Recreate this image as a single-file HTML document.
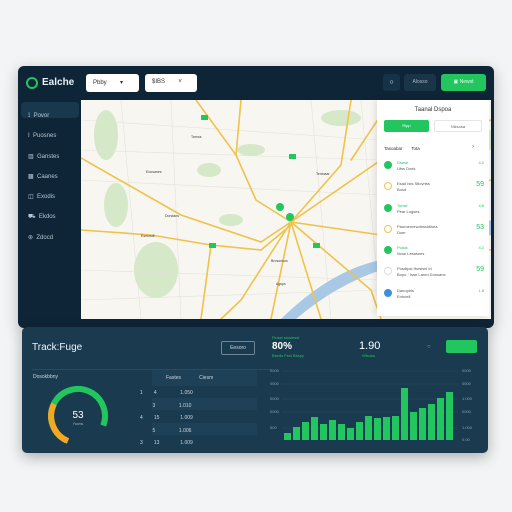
<!DOCTYPE html>
<html><head><style>
*{margin:0;padding:0;box-sizing:border-box}
body{width:512px;height:512px;background:#f3f4f5;font-family:"Liberation Sans",sans-serif;position:relative;overflow:hidden}
.abs{position:absolute}
.top{left:18px;top:66px;width:476px;height:262px;background:#0e2537;border-radius:6px;box-shadow:0 4px 14px rgba(0,0,0,.25)}
.sb{color:#b9c7d2;font-size:6px}
.bottom{left:22px;top:327px;width:466px;height:126px;background:#1a3a50;border-radius:5px;box-shadow:0 4px 14px rgba(0,0,0,.3)}
.t{color:#c9d6de;font-size:5px}
</style></head><body>
<div class="abs top"></div>
<div class="abs" style="left:26px;top:77px;width:12px;height:12px;border:2px solid #22c55e;border-radius:50%"></div>
<div class="abs" style="left:42px;top:77px;color:#e8f0f3;font-size:10px;font-weight:bold">Ealche</div>
<div class="abs" style="left:86px;top:74px;width:53px;height:18px;background:#fff;border-radius:3px;font-size:6px;padding:5px 7px;color:#333">Pbby &nbsp;&nbsp;&nbsp;&nbsp;&nbsp;&nbsp;&nbsp;▾</div>
<div class="abs" style="left:145px;top:74px;width:52px;height:18px;background:#fff;border-radius:3px;font-size:6px;padding:5px 7px;color:#333">$ΙΒS &nbsp;&nbsp;&nbsp;&nbsp;&nbsp;&nbsp;&nbsp;˅</div>
<div class="abs" style="left:383px;top:74px;width:17px;height:17px;background:#163246;border-radius:3px;color:#fff;font-size:7px;text-align:center;line-height:17px">○</div>
<div class="abs" style="left:404px;top:74px;width:32px;height:17px;background:#1a3448;border-radius:3px;color:#aabbc6;font-size:5px;text-align:center;line-height:17px">Alosso</div>
<div class="abs" style="left:441px;top:74px;width:45px;height:17px;background:#22c55e;border-radius:3px;color:#eafff0;font-size:5px;text-align:center;line-height:17px">▣ Newst</div>
<div class="abs" style="left:21px;top:102px;width:58px;height:16px;background:#17384d;border-radius:4px"></div>
<div class="abs sb" style="left:28px;top:106px;line-height:20.3px">
<div>⟟ &nbsp;Povor</div><div>Ι &nbsp;Puosnes</div><div>▥ &nbsp;Ganstes</div><div>▩ &nbsp;Caanes</div><div>◫ &nbsp;Exodis</div><div>⛟ &nbsp;Ekdos</div><div>⊛ &nbsp;Zdocd</div></div>
<div class="abs" style="left:81px;top:100px;width:410px;height:219px;background:#f7f6f1;overflow:hidden">
<svg width="410" height="219" viewBox="0 0 410 219">
<g fill="#d5e8c8"><ellipse cx="25" cy="35" rx="12" ry="25"/><ellipse cx="35" cy="105" rx="12" ry="22"/><ellipse cx="75" cy="170" rx="22" ry="28"/><ellipse cx="128" cy="70" rx="12" ry="7"/><ellipse cx="170" cy="50" rx="14" ry="6"/><ellipse cx="260" cy="18" rx="20" ry="8"/><ellipse cx="150" cy="120" rx="12" ry="6"/><ellipse cx="390" cy="40" rx="25" ry="15"/></g>
<g stroke="#e4e2da" stroke-width=".6" fill="none">
<path d="M0 20L300 40M0 80L300 95M0 170L300 180M40 0L60 219M90 0L100 219M230 0L250 219M280 0L300 219M0 200L300 190M0 50L300 60"/></g>
<path d="M200 219Q250 170 300 160L300 170Q255 185 215 219Z" fill="#a9c8e6"/>
<path d="M300 158Q360 140 410 120L410 135Q360 152 300 172Z" fill="#a9c8e6"/>
<g stroke="#f0c24a" stroke-width="1.6" fill="none" stroke-linecap="round">
<path d="M0 58L100 115L180 142L210 122"/>
<path d="M115 0L155 55L175 100L210 122"/>
<path d="M160 0L155 55"/>
<path d="M0 130L70 135L130 145L180 150L210 125"/>
<path d="M210 122L260 65L270 0"/>
<path d="M210 122L300 60L410 20"/>
<path d="M210 122L190 219M210 122L240 219M210 122L300 135L410 150"/>
<path d="M130 145L120 219M210 122L290 190L300 219M210 122L160 200L140 219"/>
<path d="M270 60L310 0M300 100L410 80"/>
</g>
<g fill="#3a3a3a" font-size="3.5"><text x="65" y="73">Eoosanes</text><text x="84" y="117">Dondans</text><text x="235" y="75">Teotoaar</text><text x="190" y="162">Brosonuos</text><text x="195" y="185">Agsps</text><text x="60" y="137">Esmosdl</text><text x="110" y="38">Tarnos</text></g>
<g fill="#22c55e"><rect x="120" y="15" width="7" height="5"/><rect x="208" y="54" width="7" height="5"/><rect x="128" y="143" width="7" height="5"/><rect x="232" y="143" width="7" height="5"/><circle cx="199" cy="107" r="4"/><circle cx="209" cy="117" r="4"/></g>
</svg></div>
<div class="abs" style="left:377px;top:100px;width:112px;height:216px;background:#fff;box-shadow:-2px 0 6px rgba(0,0,0,.1)">
<div class="abs t" style="left:0;width:112px;top:7px;text-align:center;color:#333;font-size:6px">Taanal Dspoa</div>
<div class="abs" style="left:7px;top:20px;width:45px;height:12px;background:#22c55e;border-radius:2px;color:#fff;font-size:4px;text-align:center;line-height:12px">Ripp</div>
<div class="abs" style="left:57px;top:20px;width:48px;height:12px;border:1px solid #e6e6e6;border-radius:2px;color:#666;font-size:4px;text-align:center;line-height:11px">Niksosa</div>
<div class="abs" style="left:7px;top:46px;color:#333;font-size:4.5px">Tasoabar &nbsp;&nbsp;&nbsp;&nbsp;&nbsp;&nbsp;Tota</div>
<div class="abs" style="left:95px;top:44px;color:#666;font-size:6px">›</div>
<div class="abs" style="left:7px;top:60px;width:100px;font-size:4px;color:#555">
<div style="position:relative;height:21px"><span style="position:absolute;left:0;top:1px;width:8px;height:8px;border-radius:50%;background:#22c55e"></span><span style="position:absolute;left:13px;color:#22c55e">Dsese</span><span style="position:absolute;left:13px;top:6px">Ufss Doek</span><span style="position:absolute;right:0;color:#22c55e">4.0</span></div>
<div style="position:relative;height:22px"><span style="position:absolute;left:0;top:1px;width:8px;height:8px;border-radius:50%;border:1px solid #f0c060"></span><span style="position:absolute;left:13px">Esad Ists Stlovrtss</span><span style="position:absolute;left:13px;top:6px">Bosd</span><span style="position:absolute;right:0;color:#22c55e;font-size:7px">59</span></div>
<div style="position:relative;height:21px"><span style="position:absolute;left:0;top:1px;width:8px;height:8px;border-radius:50%;background:#22c55e"></span><span style="position:absolute;left:13px;color:#22c55e">Tonsir</span><span style="position:absolute;left:13px;top:6px">Pear Logses</span><span style="position:absolute;right:0;color:#22c55e">4.8</span></div>
<div style="position:relative;height:21px"><span style="position:absolute;left:0;top:1px;width:8px;height:8px;border-radius:50%;border:1px solid #f0c060"></span><span style="position:absolute;left:13px">Pauroennrwdnssidlsea</span><span style="position:absolute;left:13px;top:6px">Doer</span><span style="position:absolute;right:0;color:#22c55e;font-size:7px">53</span></div>
<div style="position:relative;height:21px"><span style="position:absolute;left:0;top:1px;width:8px;height:8px;border-radius:50%;background:#22c55e"></span><span style="position:absolute;left:13px;color:#22c55e">Poisis</span><span style="position:absolute;left:13px;top:6px">Ncse Lesasnes</span><span style="position:absolute;right:0;color:#22c55e">4.2</span></div>
<div style="position:relative;height:22px"><span style="position:absolute;left:0;top:1px;width:8px;height:8px;border-radius:50%;border:1px solid #ddd"></span><span style="position:absolute;left:13px">Posdtpsi Iforsisnl Irl</span><span style="position:absolute;left:13px;top:6px">Bopo · Isse Lanrd Donsans</span><span style="position:absolute;right:0;color:#22c55e;font-size:7px">59</span></div>
<div style="position:relative;height:21px"><span style="position:absolute;left:0;top:1px;width:8px;height:8px;border-radius:50%;background:#3b8fe0"></span><span style="position:absolute;left:13px">Danopiris</span><span style="position:absolute;left:13px;top:6px">Enhoell</span><span style="position:absolute;right:0;color:#22c55e">1.8</span></div>
</div></div>
<div class="abs bottom">
<div class="abs" style="left:10px;top:15px;color:#eef4f6;font-size:10px">Track:Fuge</div>
<div class="abs" style="left:199px;top:14px;width:34px;height:14px;border:1px solid #6b8798;border-radius:2px;color:#c9d6de;font-size:5px;text-align:center;line-height:12px">Eesoro</div>
<div class="abs" style="left:10px;top:42px;width:240px;height:1px;background:#2b4a60"></div>
<div class="abs t" style="left:11px;top:47px">Dosokbbny</div>
<div class="abs" style="left:130px;top:43px;width:105px;height:16px;background:#1f4158"></div>
<div class="abs t" style="left:144px;top:48px">Fastes &nbsp;&nbsp;&nbsp;&nbsp;&nbsp;&nbsp;&nbsp;&nbsp;&nbsp;&nbsp;&nbsp;&nbsp;Ciesm</div>
<div class="abs" style="left:130px;top:71px;width:105px;height:12px;background:#1f4158"></div>
<div class="abs" style="left:130px;top:96px;width:105px;height:12px;background:#1f4158"></div>
<div class="abs t" style="left:118px;top:60px;line-height:12.5px;width:120px">
<div>1 &nbsp;&nbsp;&nbsp;&nbsp;&nbsp;&nbsp;&nbsp;4 &nbsp;&nbsp;&nbsp;&nbsp;&nbsp;&nbsp;&nbsp;&nbsp;&nbsp;&nbsp;&nbsp;&nbsp;&nbsp;&nbsp;&nbsp;&nbsp;1.050</div>
<div>&nbsp;&nbsp;&nbsp;&nbsp;&nbsp;&nbsp;&nbsp;&nbsp;&nbsp;3 &nbsp;&nbsp;&nbsp;&nbsp;&nbsp;&nbsp;&nbsp;&nbsp;&nbsp;&nbsp;&nbsp;&nbsp;&nbsp;&nbsp;&nbsp;&nbsp;1.010</div>
<div>4 &nbsp;&nbsp;&nbsp;&nbsp;&nbsp;&nbsp;&nbsp;15 &nbsp;&nbsp;&nbsp;&nbsp;&nbsp;&nbsp;&nbsp;&nbsp;&nbsp;&nbsp;&nbsp;&nbsp;&nbsp;&nbsp;1.009</div>
<div>&nbsp;&nbsp;&nbsp;&nbsp;&nbsp;&nbsp;&nbsp;&nbsp;&nbsp;5 &nbsp;&nbsp;&nbsp;&nbsp;&nbsp;&nbsp;&nbsp;&nbsp;&nbsp;&nbsp;&nbsp;&nbsp;&nbsp;&nbsp;&nbsp;&nbsp;1.006</div>
<div>3 &nbsp;&nbsp;&nbsp;&nbsp;&nbsp;&nbsp;&nbsp;13 &nbsp;&nbsp;&nbsp;&nbsp;&nbsp;&nbsp;&nbsp;&nbsp;&nbsp;&nbsp;&nbsp;&nbsp;&nbsp;&nbsp;1.009</div></div>
<svg class="abs" style="left:22px;top:55px" width="68" height="68" viewBox="0 0 68 68">
<circle cx="34" cy="34" r="27" fill="none" stroke="#22c55e" stroke-width="6" stroke-dasharray="125 170" transform="rotate(115 34 34)"/>
<path d="M10 22A27 27 0 0 0 24 59" fill="none" stroke="#f5a623" stroke-width="6"/>
<text x="34" y="36" fill="#fff" font-size="10" text-anchor="middle" font-family="Liberation Sans">53</text>
<text x="34" y="43" fill="#9fb3c0" font-size="3.5" text-anchor="middle" font-family="Liberation Sans">Yaoms</text></svg>
<div class="abs" style="left:250px;top:8px;color:#22c55e;font-size:4px">Flosst stoslesst</div>
<div class="abs" style="left:250px;top:14px;color:#fff;font-size:10px;font-weight:bold">80%</div>
<div class="abs" style="left:250px;top:26px;color:#22c55e;font-size:4px">Bseds Fsst Bbspy</div>
<div class="abs" style="left:337px;top:13px;color:#fff;font-size:11px">1.90</div>
<div class="abs" style="left:340px;top:26px;color:#22c55e;font-size:4px">Wlsoss</div>
<div class="abs" style="left:405px;top:17px;color:#aaa;font-size:6px">○</div>
<div class="abs" style="left:424px;top:13px;width:31px;height:13px;background:#22c55e;border-radius:2px"></div>
<svg class="abs" style="left:248px;top:40px" width="215" height="80">
<g stroke="#2b4a60" stroke-width=".6"><path d="M12 4H188M12 17H188M12 32H188M12 45H188M12 61H188"/></g>
<g fill="#88a0b0" font-size="4" font-family="Liberation Sans"><text x="0" y="5">0000</text><text x="0" y="18">0000</text><text x="0" y="33">0000</text><text x="0" y="46">0000</text><text x="0" y="62">500</text><text x="192" y="5">0000</text><text x="192" y="18">0000</text><text x="192" y="33">1.000</text><text x="192" y="46">0000</text><text x="192" y="62">1.000</text><text x="192" y="74">0.00</text></g>
<g fill="#22c55e">
<rect x="14" y="66" width="7" height="7"/><rect x="23" y="60" width="7" height="13"/><rect x="32" y="55" width="7" height="18"/><rect x="41" y="50" width="7" height="23"/><rect x="50" y="57" width="7" height="16"/><rect x="59" y="53" width="7" height="20"/><rect x="68" y="57" width="7" height="16"/><rect x="77" y="61" width="7" height="12"/><rect x="86" y="55" width="7" height="18"/><rect x="95" y="49" width="7" height="24"/><rect x="104" y="51" width="7" height="22"/><rect x="113" y="50" width="7" height="23"/><rect x="122" y="49" width="7" height="24"/><rect x="131" y="21" width="7" height="52"/><rect x="140" y="45" width="7" height="28"/><rect x="149" y="41" width="7" height="32"/><rect x="158" y="37" width="7" height="36"/><rect x="167" y="31" width="7" height="42"/><rect x="176" y="25" width="7" height="48"/></g>
</svg>
</div>
</body></html>
